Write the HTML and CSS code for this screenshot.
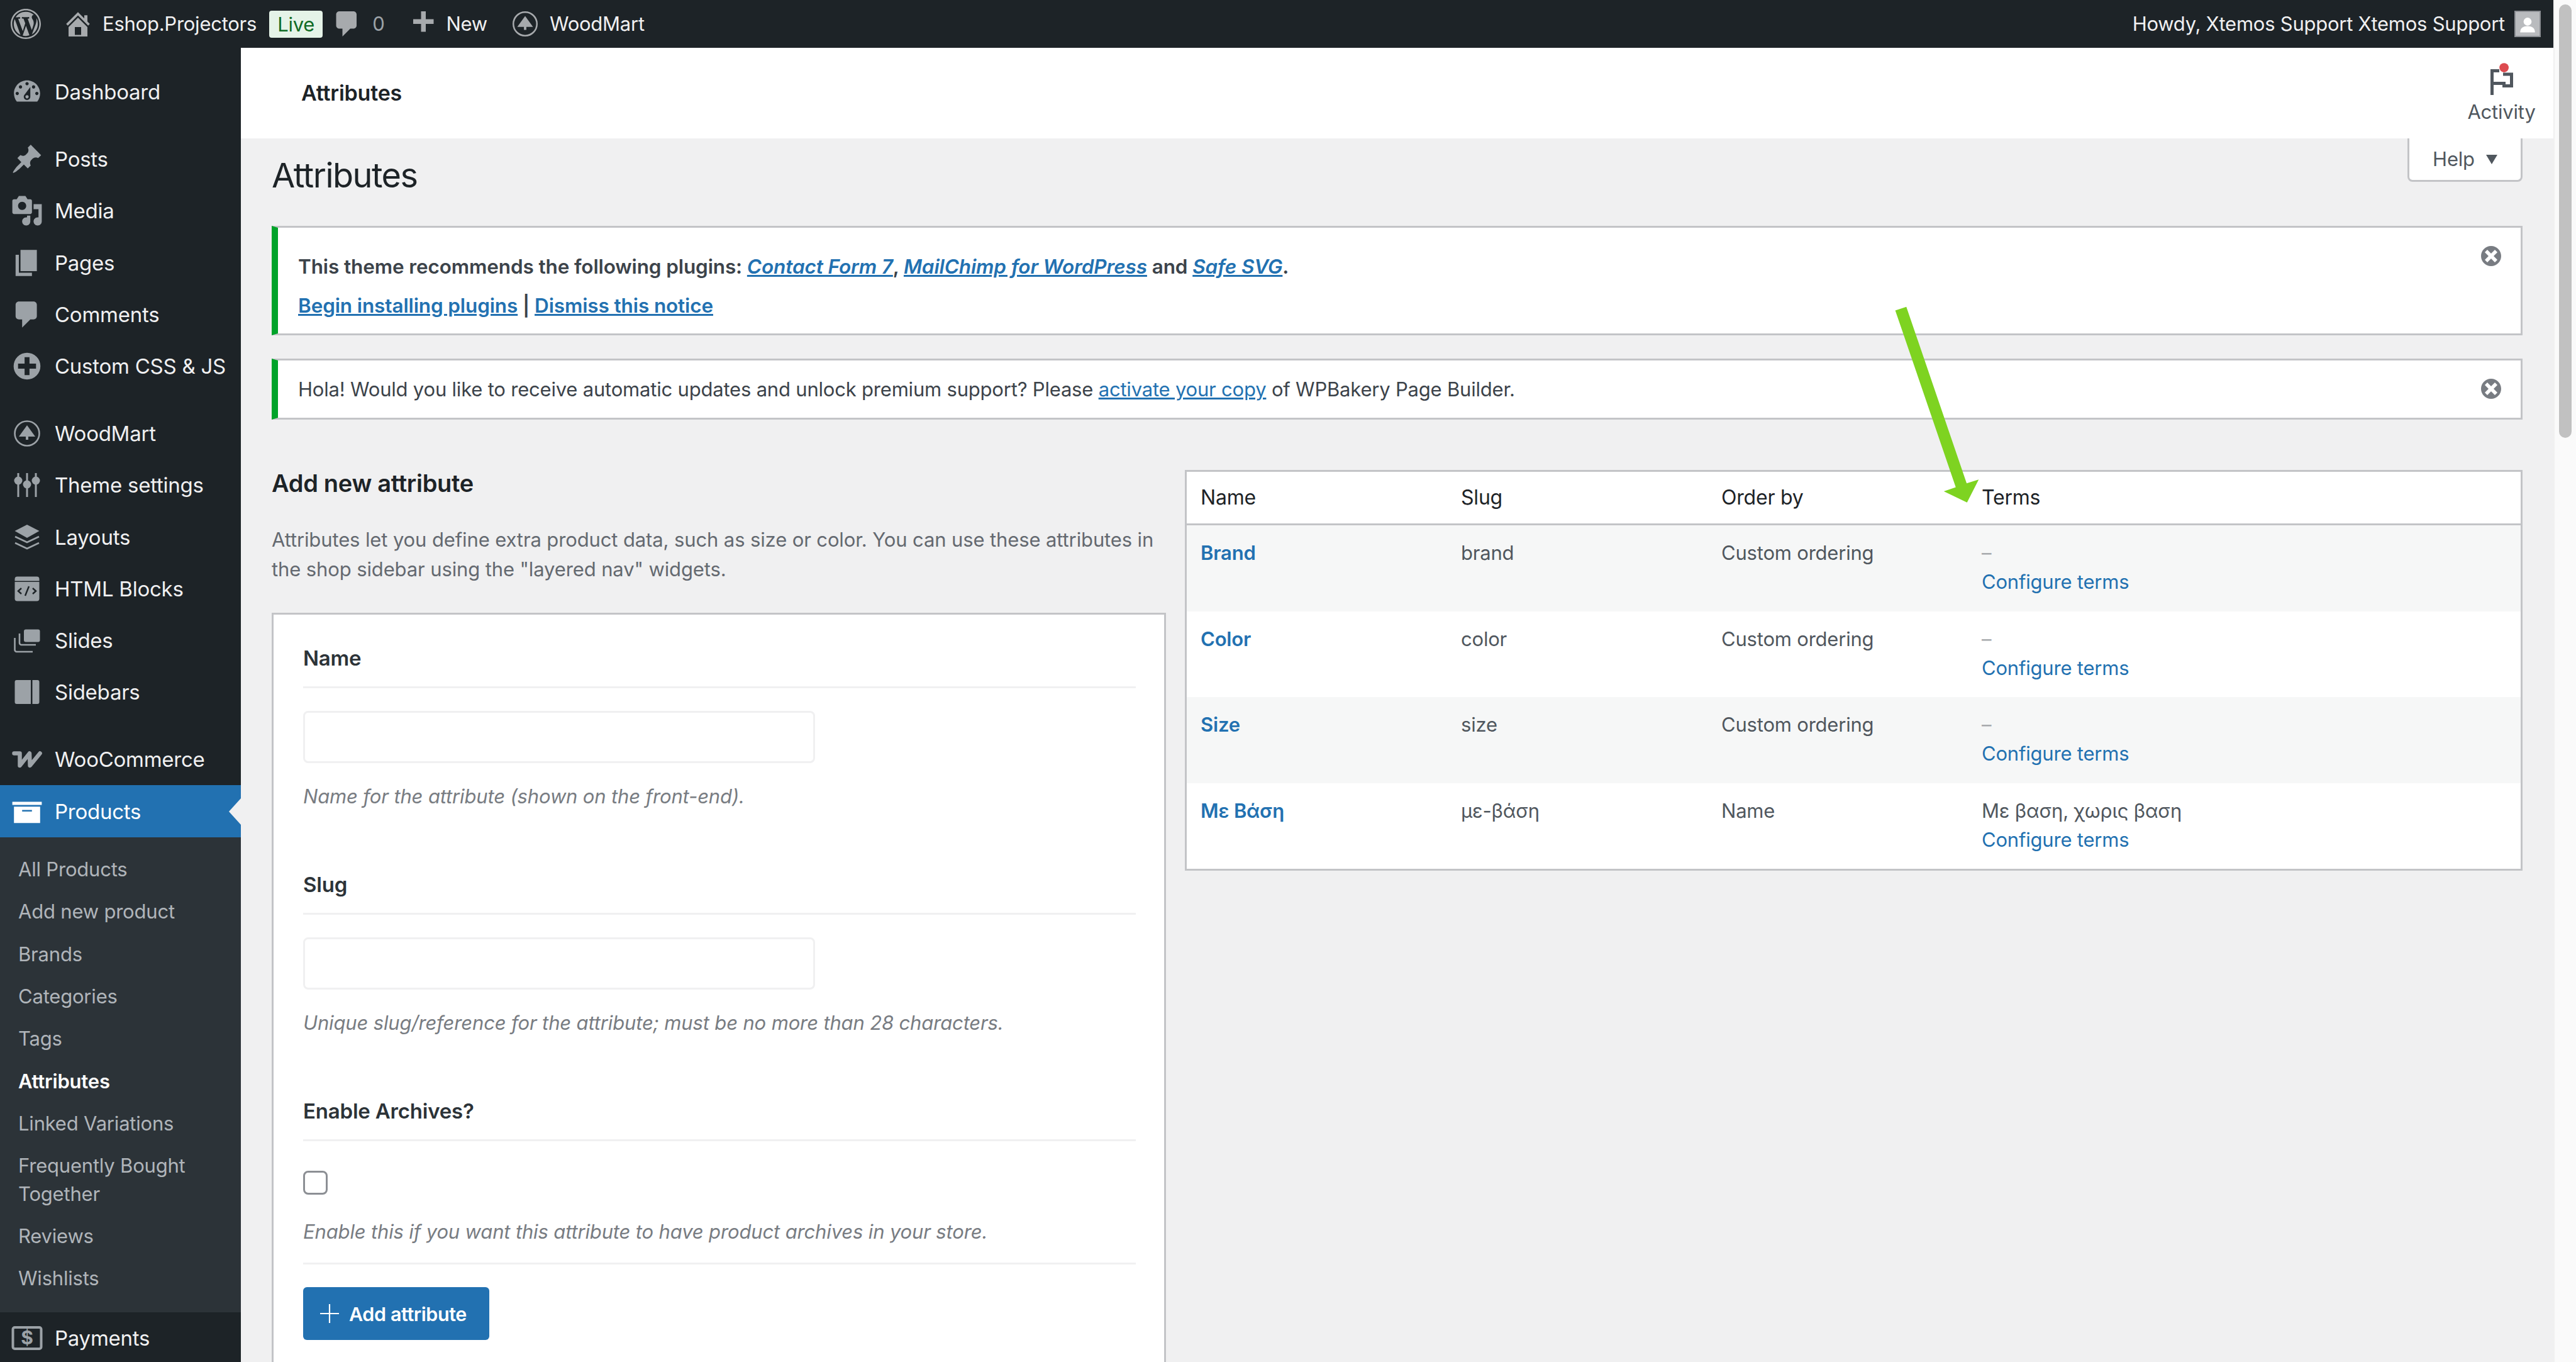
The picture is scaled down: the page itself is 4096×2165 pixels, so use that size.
FILE: index.html
```html
<!DOCTYPE html>
<html lang="en">
<head>
    <meta charset="UTF-8">
    <title>Attributes</title>
    <link rel="stylesheet" href="styles.css">
</head>
<body>
    <svg class="defs" aria-hidden="true">
        <symbol id="i-comment" viewBox="0 0 20 20"><path d="M5 2h9c1.1 0 2 .9 2 2v7c0 1.1-.9 2-2 2h-2l-5 5v-5H5c-1.1 0-2-.9-2-2V4c0-1.1.9-2 2-2z"/></symbol>
        <symbol id="i-woodmart" viewBox="0 0 52 52">
            <circle cx="26" cy="26" r="19.5" fill="none" stroke="currentColor" stroke-width="2.6"/>
            <path d="M26 13l13 18H28v5h-4v-5H13z"/>
        </symbol>
        <symbol id="i-dismiss" viewBox="2 2 16 16"><path d="M10 2c4.42 0 8 3.58 8 8s-3.58 8-8 8-8-3.58-8-8 3.58-8 8-8zm5 11l-3-3 3-3-2-2-3 3-3-3-2 2 3 3-3 3 2 2 3-3 3 3z"/></symbol>
    </svg>

    <div class="app">
        <div class="page">
            <!-- Top bar -->
            <header class="adminbar">
                <div class="bar-left">
                    <svg class="bar-wp" viewBox="0 0 20 20"><path d="M20 10c0-5.52-4.48-10-10-10S0 4.48 0 10s4.48 10 10 10 10-4.48 10-10zM10 1.01c4.97 0 8.99 4.02 8.99 8.99s-4.02 8.99-8.99 8.99S1.01 14.97 1.01 10 5.03 1.01 10 1.01zM8.01 14.82L4.96 6.61c.49-.03 1.05-.08 1.05-.08.43-.05.38-1.01-.06-.99 0 0-1.29.1-2.13.1-.15 0-.33 0-.52-.01 1.44-2.17 3.9-3.6 6.7-3.6 2.09 0 3.99.79 5.41 2.09-.6-.08-1.45.35-1.45 1.42 0 .66.38 1.22.79 1.88.31.54.5 1.22.5 2.21 0 1.34-1.27 4.48-1.27 4.48l-2.71-7.5c.48-.03.75-.16.75-.16.43-.05.38-1.1-.05-1.08 0 0-1.3.11-2.14.11-.78 0-2.11-.11-2.11-.11-.43-.02-.48 1.06-.05 1.08l.84.08 1.12 3.04zm6.02 2.15L16.64 10s.67-1.69.39-3.81c.63 1.14.94 2.42.94 3.81 0 2.96-1.56 5.58-3.94 6.97zM2.68 6.77L6.5 17.25c-2.67-1.3-4.47-4.08-4.47-7.25 0-1.16.2-2.23.65-3.23zm7.45 4.53l2.29 6.25c-.75.27-1.57.42-2.42.42-.72 0-1.41-.11-2.06-.3z"/></svg>
                    <div class="bar-site">
                        <svg class="bar-icon" viewBox="0 0 20 20"><path d="M16 8.5l1.53 1.53-1.06 1.06L10 4.62l-6.47 6.47-1.06-1.06L10 2.5l4 4v-2h2v4zm-6-2.46l6 5.99V18H4v-5.97zM12 17v-5H8v5h4z"/></svg>
                        <span>Eshop.Projectors</span>
                    </div>
                    <span class="bar-live">Live</span>
                    <div class="bar-comments">
                        <svg class="bar-icon"><use href="#i-comment"/></svg>
                        <span>0</span>
                    </div>
                    <div class="bar-new">
                        <svg class="bar-icon" viewBox="0 0 20 20"><path d="M17 7v3h-5v5H9v-5H4V7h5V2h3v5h5z"/></svg>
                        <span>New</span>
                    </div>
                    <div class="bar-theme">
                        <svg class="bar-icon"><use href="#i-woodmart"/></svg>
                        <span>WoodMart</span>
                    </div>
                </div>
                <div class="bar-right">
                    <span>Howdy, Xtemos Support Xtemos Support</span>
                    <svg class="avatar" viewBox="0 0 42 42">
                        <rect width="42" height="42" fill="#b9bbbe"/>
                        <circle cx="21" cy="17" r="7" fill="#fff"/>
                        <path d="M8 36c0-8 6-11 13-11s13 3 13 11z" fill="#fff"/>
                    </svg>
                </div>
            </header>

            <div class="layout">
                <!-- Sidebar -->
                <nav class="sidebar">
                    <div class="menu-item">
                        <svg class="menu-icon" viewBox="0 0 20 20"><path d="M3.76 16h12.48c1.1-1.37 1.76-3.11 1.76-5 0-4.42-3.58-8-8-8s-8 3.58-8 8c0 1.89.66 3.63 1.76 5zM10 4c.55 0 1 .45 1 1s-.45 1-1 1-1-.45-1-1 .45-1 1-1zM6 6c.55 0 1 .45 1 1s-.45 1-1 1-1-.45-1-1 .45-1 1-1zm8 0c.55 0 1 .45 1 1s-.45 1-1 1-1-.45-1-1 .45-1 1-1zm-5.37 5.55L12 7v6c0 1.1-.9 2-2 2s-2-.9-2-2c0-.57.24-1.08.63-1.45zM4 10c.55 0 1 .45 1 1s-.45 1-1 1-1-.45-1-1 .45-1 1-1zm12 0c.55 0 1 .45 1 1s-.45 1-1 1-1-.45-1-1 .45-1 1-1zm-5 3c0-.55-.45-1-1-1s-1 .45-1 1 .45 1 1 1 1-.45 1-1z"/></svg>
                        <span>Dashboard</span>
                    </div>
                    <div class="menu-item menu-gap">
                        <svg class="menu-icon" viewBox="0 0 20 20"><path d="M10.44 3.02l1.82-1.82 6.36 6.35-1.83 1.82c-1.05-.68-2.48-.57-3.41.36l-.75.75c-.92.93-1.04 2.35-.35 3.41l-1.83 1.82-2.41-2.41-2.8 2.79c-.42.42-3.38 2.71-3.8 2.29s1.86-3.39 2.28-3.81l2.79-2.79L4.1 9.36l1.83-1.82c1.05.69 2.48.57 3.4-.36l.75-.75c.93-.92 1.05-2.35.36-3.41z"/></svg>
                        <span>Posts</span>
                    </div>
                    <div class="menu-item">
                        <svg class="menu-icon" viewBox="0 0 20 20"><path d="M13 11V4c0-.55-.45-1-1-1h-1.67L9 1H5L3.67 3H2c-.55 0-1 .45-1 1v7c0 .55.45 1 1 1h10c.55 0 1-.45 1-1zM7 4.5c1.38 0 2.5 1.12 2.5 2.5S8.38 9.5 7 9.5 4.5 8.38 4.5 7 5.62 4.5 7 4.5zM14 6h5v10.5c0 1.38-1.12 2.5-2.5 2.5S14 17.88 14 16.5s1.12-2.5 2.5-2.5c.17 0 .34.02.5.05V9h-3V6zm-4 8.05V13h2v3.5c0 1.38-1.12 2.5-2.5 2.5S7 17.88 7 16.5 8.12 14 9.5 14c.17 0 .34.02.5.05z"/></svg>
                        <span>Media</span>
                    </div>
                    <div class="menu-item">
                        <svg class="menu-icon" viewBox="0 0 20 20"><path d="M6 15V2h10v13H6zm-1 1h8v2H3V5h2v11z"/></svg>
                        <span>Pages</span>
                    </div>
                    <div class="menu-item">
                        <svg class="menu-icon"><use href="#i-comment"/></svg>
                        <span>Comments</span>
                    </div>
                    <div class="menu-item">
                        <svg class="menu-icon" viewBox="0 0 20 20"><path d="M15.8 4.2c3.2 3.21 3.2 8.39 0 11.6-3.21 3.2-8.39 3.2-11.6 0C1 12.59 1 7.41 4.2 4.2 7.41 1 12.59 1 15.8 4.2zm-4.3 11.3v-4h4v-3h-4v-4h-3v4h-4v3h4v4h3z"/></svg>
                        <span>Custom CSS &amp; JS</span>
                    </div>
                    <div class="menu-item menu-gap">
                        <svg class="menu-icon"><use href="#i-woodmart"/></svg>
                        <span>WoodMart</span>
                    </div>
                    <div class="menu-item">
                        <svg class="menu-icon" viewBox="0 0 52 52">
                            <path d="M12 7v38M26 7v38M40 7v38" fill="none" stroke="currentColor" stroke-width="3"/>
                            <circle cx="12" cy="19" r="6.5"/><circle cx="26" cy="25" r="6.5"/><circle cx="40" cy="19" r="6.5"/>
                        </svg>
                        <span>Theme settings</span>
                    </div>
                    <div class="menu-item">
                        <svg class="menu-icon" viewBox="0 0 52 52">
                            <path d="M26 6l19.5 10L26 27 6.500 16z"/>
                            <path d="M7 25l19 9 19-9M7 35l19 9 19-9" fill="none" stroke="currentColor" stroke-width="2.6"/>
                        </svg>
                        <span>Layouts</span>
                    </div>
                    <div class="menu-item">
                        <svg class="menu-icon" viewBox="0 0 52 52">
                            <path d="M6.500 13.500v-3a4 4 0 0 1 4-4h31a4 4 0 0 1 4 4v3z"/>
                            <path d="M6.500 15h39v26.500a4 4 0 0 1-4 4h-31a4 4 0 0 1-4-4z"/>
                            <path d="M17 25l-5 4.500 5 4.500M35 25l5 4.500-5 4.500M29 22l-6 15" fill="none" stroke="#1d2327" stroke-width="2.400"/>
                        </svg>
                        <span>HTML Blocks</span>
                    </div>
                    <div class="menu-item">
                        <svg class="menu-icon" viewBox="0 0 52 52">
                            <rect x="21" y="8.500" width="25.500" height="20" rx="3"/>
                            <path d="M14 15v15a3 3 0 0 0 3 3h23M6.500 22v19a3 3 0 0 0 3 3H35" fill="none" stroke="currentColor" stroke-width="2.600"/>
                        </svg>
                        <span>Slides</span>
                    </div>
                    <div class="menu-item">
                        <svg class="menu-icon" viewBox="0 0 52 52">
                            <path d="M9.500 7h22.500v38H9.500a3 3 0 0 1-3-3V10a3 3 0 0 1 3-3zM34.500 7h8a3 3 0 0 1 3 3v32a3 3 0 0 1-3 3h-8z"/>
                        </svg>
                        <span>Sidebars</span>
                    </div>
                    <div class="menu-item menu-gap">
                        <svg class="menu-icon" viewBox="0 0 52 52">
                            <path d="M5.500 16.500h9v19.500L30 16.500l.6 19.500 16-19.500" fill="none" stroke="currentColor" stroke-width="6.500" stroke-linecap="round" stroke-linejoin="round"/>
                        </svg>
                        <span>WooCommerce</span>
                    </div>
                    <div class="menu-item menu-active">
                        <svg class="menu-icon" viewBox="0 0 20 20"><path d="M19 4v2H1V4h18zM2 7h16v10H2V7zm11 3V9H7v1h6z"/></svg>
                        <span>Products</span>
                    </div>
                    <ul class="submenu">
                        <li>All Products</li>
                        <li>Add new product</li>
                        <li>Brands</li>
                        <li>Categories</li>
                        <li>Tags</li>
                        <li class="current">Attributes</li>
                        <li>Linked Variations</li>
                        <li>Frequently Bought Together</li>
                        <li>Reviews</li>
                        <li>Wishlists</li>
                    </ul>
                    <div class="menu-item">
                        <svg class="menu-icon" viewBox="0 0 52 52">
                            <rect x="3.500" y="9" width="45" height="34" rx="3" fill="none" stroke="currentColor" stroke-width="4"/>
                            <text x="26" y="36" text-anchor="middle" class="pay-sign">$</text>
                        </svg>
                        <span>Payments</span>
                    </div>
                </nav>

                <main class="main">
                    <div class="topline">
                        <h2 class="topline-title">Attributes</h2>
                        <div class="activity">
                            <svg class="activity-flag" viewBox="0 -10 36 51">
                                <path d="M2.500 41V2.500H14M2.500 22.500h19v4h12V8H20" fill="none" stroke="#50575e" stroke-width="5"/>
                                <circle cx="21.600" cy="-2.400" r="7.400" fill="#dd4a4f"/>
                            </svg>
                            <span>Activity</span>
                        </div>
                    </div>

                    <div class="content">
                        <div class="title-row">
                            <h1>Attributes</h1>
                            <div class="help-tab">Help <i class="help-caret"></i></div>
                        </div>

                        <div class="notice notice-first">
                            <p class="notice-strong">This theme recommends the following plugins: <a class="em-link" href="#">Contact Form 7</a>, <a class="em-link" href="#">MailChimp for WordPress</a> and <a class="em-link" href="#">Safe SVG</a>.</p>
                            <p class="notice-strong notice-line"><a href="#">Begin installing plugins</a> | <a href="#">Dismiss this notice</a></p>
                            <svg class="notice-dismiss"><use href="#i-dismiss"/></svg>
                        </div>
                        <div class="notice notice-second">
                            <p>Hola! Would you like to receive automatic updates and unlock premium support? Please <a href="#">activate your copy</a> of WPBakery Page Builder.</p>
                            <svg class="notice-dismiss"><use href="#i-dismiss"/></svg>
                        </div>

                        <div class="columns">
                            <section class="col-form">
                                <h2 class="form-title">Add new attribute</h2>
                                <p class="form-desc">Attributes let you define extra product data, such as size or color. You can use these attributes in the shop sidebar using the "layered nav" widgets.</p>
                                <div class="card">
                                    <div class="field">
                                        <label class="field-label">Name</label>
                                        <input class="field-input" type="text">
                                        <p class="field-help">Name for the attribute (shown on the front-end).</p>
                                    </div>
                                    <div class="field">
                                        <label class="field-label">Slug</label>
                                        <input class="field-input" type="text">
                                        <p class="field-help">Unique slug/reference for the attribute; must be no more than 28 characters.</p>
                                    </div>
                                    <div class="field field-last">
                                        <label class="field-label">Enable Archives?</label>
                                        <span class="check-box"></span>
                                        <p class="field-help">Enable this if you want this attribute to have product archives in your store.</p>
                                    </div>
                                    <button class="add-btn" type="button">
                                        <svg class="add-plus" viewBox="0 0 30 30"><path d="M15 0v30M0 15h30" stroke="#fff" stroke-width="2.200"/></svg>
                                        Add attribute
                                    </button>
                                </div>
                            </section>

                            <section class="col-table">
                                <table class="attr-table">
                                    <colgroup><col class="col-w"><col class="col-w"><col class="col-w"><col></colgroup>
                                    <thead>
                                        <tr><th>Name</th><th>Slug</th><th>Order by</th><th>Terms</th></tr>
                                    </thead>
                                    <tbody>
                                        <tr class="striped">
                                            <td><a class="attr-name" href="#">Brand</a></td><td>brand</td><td>Custom ordering</td>
                                            <td><span class="dash">–</span><br><a href="#">Configure terms</a></td>
                                        </tr>
                                        <tr>
                                            <td><a class="attr-name" href="#">Color</a></td><td>color</td><td>Custom ordering</td>
                                            <td><span class="dash">–</span><br><a href="#">Configure terms</a></td>
                                        </tr>
                                        <tr class="striped">
                                            <td><a class="attr-name" href="#">Size</a></td><td>size</td><td>Custom ordering</td>
                                            <td><span class="dash">–</span><br><a href="#">Configure terms</a></td>
                                        </tr>
                                        <tr>
                                            <td><a class="attr-name" href="#">Με Βάση</a></td><td>με-βάση</td><td>Name</td>
                                            <td>Με βαση, χωρις βαση<br><a href="#">Configure terms</a></td>
                                        </tr>
                                    </tbody>
                                </table>
                            </section>
                        </div>
                    </div>
                </main>
            </div>
        </div>

        <div class="scrollbar"><div class="scroll-thumb"></div></div>

        <!-- Annotation drawn over the screenshot -->
        <svg class="green-arrow" viewBox="0 0 160 330">
            <polygon points="13.600,13.400 31.200,7.700 127.100,288.300 146.300,282.300 127.700,318.800 90.800,301 109.800,294.600" fill="#7ed321"/>
        </svg>
    </div>
</body>
</html>
```

FILE: styles.css
```css
* {
    box-sizing: border-box;
}
html, body {
    margin: 0;
    padding: 0;
}
body {
    font-family: Inter, "Noto Sans", "Liberation Sans", sans-serif;
    font-size: 31px;
    line-height: 46px;
    letter-spacing: -0.2px;
    color: #3c434a;
    background: #f0f0f1;
    overflow: hidden;
}
a {
    color: #2271b1;
}
p, h1, h2, ul {
    margin: 0;
    padding: 0;
}
.defs {
    display: none;
}
.app {
    position: relative;
    display: flex;
    width: 4096px;
    height: 2165px;
    overflow: hidden;
}
.page {
    flex: 1;
    display: flex;
    flex-direction: column;
    min-width: 0;
}

/* Top bar */
.adminbar {
    flex: none;
    height: 76px;
    background: #1d2327;
    color: #f0f0f1;
    display: flex;
    justify-content: space-between;
    align-items: center;
    padding: 0 20px 0 17px;
    font-size: 31px;
    letter-spacing: -0.25px;
}
.bar-left, .bar-right, .bar-site, .bar-comments, .bar-new, .bar-theme {
    display: flex;
    align-items: center;
}
.bar-wp {
    width: 48px;
    height: 48px;
    fill: #a7aaad;
}
.bar-icon {
    width: 50px;
    height: 50px;
    fill: #a7aaad;
    color: #a7aaad;
}
.bar-site {
    margin-left: 34px;
    gap: 14px;
}
.bar-live {
    margin-left: 20px;
    width: 85px;
    height: 43px;
    line-height: 43px;
    text-align: center;
    background: #e5f3e8;
    color: #0f6b24;
    border-radius: 4px;
}
.bar-comments {
    margin-left: 14px;
    gap: 15px;
    color: #9ca2a7;
}
.bar-new {
    margin-left: 36px;
    gap: 12px;
}
.bar-theme {
    margin-left: 35px;
    gap: 14px;
}
.bar-right {
    gap: 15px;
}
.avatar {
    width: 42px;
    height: 42px;
    border: 2px solid #8c8f94;
}

.layout {
    flex: 1;
    display: flex;
    min-height: 0;
}

/* Sidebar */
.sidebar {
    flex: none;
    width: 383px;
    background: #1d2327;
    padding-top: 29px;
    color: #f0f0f1;
    font-size: 33px;
    letter-spacing: -0.25px;
}
.menu-item {
    position: relative;
    display: flex;
    align-items: center;
    height: 82.2px;
    padding-left: 17px;
    gap: 18px;
}
.menu-gap {
    margin-top: 25px;
}
.menu-icon {
    flex: none;
    width: 52px;
    height: 52px;
    fill: #9ca2a7;
    color: #9ca2a7;
}
.pay-sign {
    font-size: 30px;
    font-weight: 700;
    fill: #9ca2a7;
}
.menu-active {
    background: #2271b1;
    color: #fff;
}
.menu-active .menu-icon {
    fill: #fff;
}
.menu-active::after {
    content: "";
    position: absolute;
    right: 0;
    top: 21px;
    border-style: solid;
    border-width: 21px 19px 21px 0;
    border-color: transparent #f0f0f1 transparent transparent;
}
.submenu {
    list-style: none;
    background: #2c3338;
    padding: 18px 40px 20px 29px;
    font-size: 31px;
    line-height: 44.300px;
    color: #b0b5ba;
    letter-spacing: -0.2px;
}
.submenu li {
    padding: 11.500px 0;
}
.submenu .current {
    color: #fff;
    font-weight: 600;
}

/* Main */
.main {
    flex: 1;
    min-width: 0;
    display: flex;
    flex-direction: column;
}
.topline {
    flex: none;
    height: 144px;
    background: #fff;
    display: flex;
    justify-content: space-between;
    padding: 0 29px 0 96px;
}
.topline-title {
    font-size: 34px;
    font-weight: 600;
    line-height: 144px;
    color: #1d2327;
    letter-spacing: -0.2px;
}
.activity {
    display: flex;
    flex-direction: column;
    align-items: center;
    width: 107px;
    padding-top: 24px;
    color: #50575e;
    line-height: 46px;
}
.activity-flag {
    width: 36px;
    height: 51px;
    margin-bottom: 4px;
}
.content {
    flex: 1;
    min-height: 0;
    padding: 0 49px;
}
.title-row {
    display: flex;
    justify-content: space-between;
    align-items: flex-start;
    height: 139px;
}
h1 {
    font-size: 54px;
    font-weight: 400;
    line-height: 118px;
    color: #1d2327;
    letter-spacing: -1.5px;
}
.help-tab {
    width: 183px;
    height: 69px;
    background: #fff;
    border: 3px solid #c3c4c7;
    border-top: 0;
    border-radius: 0 0 8px 8px;
    color: #50575e;
    line-height: 62px;
    display: flex;
    align-items: center;
    justify-content: center;
    gap: 18px;
}
.help-caret {
    border-style: solid;
    border-width: 15px 9px 0;
    border-color: #50575e transparent transparent;
}

/* Notices */
.notice {
    position: relative;
    background: #fff;
    border: 3px solid #c3c4c7;
    border-left: 10px solid #00a32a;
    padding: 0 60px 0 32px;
}
.notice-first {
    height: 174px;
    padding-top: 39px;
}
.notice-second {
    height: 97px;
    margin-top: 37px;
    padding-top: 23px;
}
.notice-strong {
    font-size: 31.500px;
    font-weight: 600;
    letter-spacing: -0.12px;
}
.notice-line {
    margin-top: 16px;
}
.em-link {
    font-style: italic;
}
.notice-dismiss {
    position: absolute;
    top: 29px;
    right: 31px;
    width: 32px;
    height: 32px;
    fill: #787c82;
}

/* Form + table */
.columns {
    display: flex;
    gap: 30px;
    margin-top: 80px;
}
.col-form {
    flex: none;
    width: 1422px;
}
.col-table {
    flex: 1;
    min-width: 0;
}
.form-title {
    font-size: 38px;
    font-weight: 600;
    line-height: 42px;
    color: #1d2327;
    letter-spacing: -0.3px;
}
.form-desc {
    margin-top: 45px;
    line-height: 47px;
    letter-spacing: -0.12px;
    color: #646970;
}
.card {
    margin-top: 46px;
    background: #fff;
    border: 3px solid #c3c4c7;
    padding: 46px 45px 60px 47px;
}
.field {
    margin-bottom: 94px;
}
.field-last {
    margin-bottom: 0;
    padding-bottom: 26px;
    border-bottom: 3px solid #f0f0f1;
}
.field-label {
    display: block;
    font-size: 33px;
    font-weight: 600;
    color: #2c3338;
    padding-bottom: 22px;
    border-bottom: 3px solid #f0f0f1;
}
.field-input {
    display: block;
    width: 814px;
    height: 83px;
    margin-top: 36px;
    background: #fff;
    border: 3px solid #f0f0f1;
    border-radius: 8px;
}
.field-help {
    margin-top: 30px;
    font-style: italic;
    letter-spacing: -0.15px;
    color: #787c82;
}
.check-box {
    display: block;
    width: 39px;
    height: 38px;
    margin-top: 47px;
    border: 3px solid #8c8f94;
    border-radius: 8px;
}
.check-box + .field-help {
    margin-top: 36px;
}
.add-btn {
    display: flex;
    align-items: center;
    gap: 16px;
    width: 296px;
    height: 84px;
    margin-top: 36px;
    padding: 0 0 0 27px;
    border: 0;
    border-radius: 6px;
    background: #2271b1;
    color: #fff;
    font: 600 30.500px Inter, sans-serif;
    letter-spacing: -0.4px;
}
.add-plus {
    width: 30px;
    height: 30px;
}
.attr-table {
    width: 100%;
    table-layout: fixed;
    border-collapse: separate;
    border-spacing: 0;
    background: #fff;
    border: 3px solid #c3c4c7;
}
.col-w {
    width: 414px;
}
.attr-table th {
    height: 85px;
    padding: 0 0 0 22px;
    text-align: left;
    font-size: 32px;
    font-weight: 400;
    color: #1d2327;
    border-bottom: 3px solid #c3c4c7;
}
.attr-table td {
    height: 136.500px;
    padding: 21px 0 23px 22px;
    vertical-align: top;
    color: #50575e;
}
.striped {
    background: #f6f7f7;
}
.attr-table a {
    text-decoration: none;
}
.attr-name {
    font-weight: 600;
}
.dash {
    color: #a7aaad;
}
.scrollbar {
    flex: none;
    width: 36px;
    background: #fafafa;
    border-left: 2px solid #f0f0f0;
    padding: 7px 7px 0;
}
.scroll-thumb {
    height: 689px;
    border-radius: 10px;
    background: #c1c1c1;
}
.green-arrow {
    position: absolute;
    left: 3000px;
    top: 480px;
    width: 160px;
    height: 330px;
}
```
